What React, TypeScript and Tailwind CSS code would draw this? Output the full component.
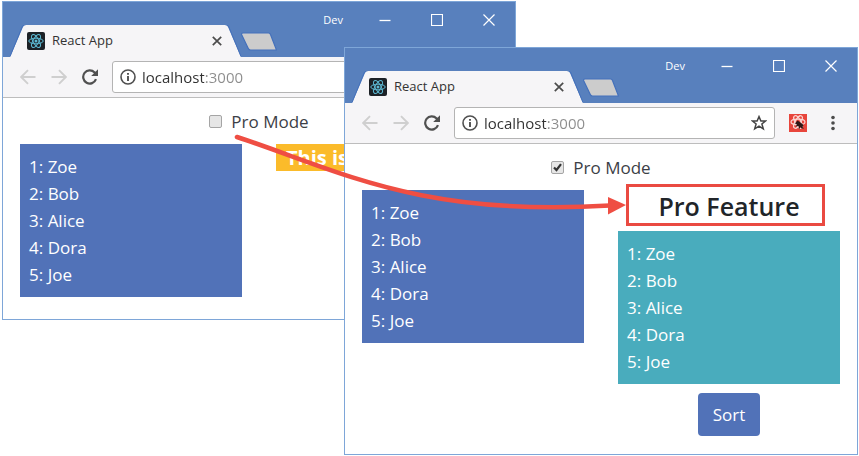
import { useId, type ReactNode } from "react";

const NAMES = ["Zoe", "Bob", "Alice", "Dora", "Joe"];

function ReactLogo() {
  return (
    <svg className="size-[18px] shrink-0" viewBox="0 0 18 18" aria-hidden="true">
      <rect width="18" height="18" rx="2" fill="#1c2126" />
      <g fill="none" stroke="#5db9d3" strokeWidth="1">
        <ellipse cx="9" cy="9" rx="7.2" ry="2.8" />
        <ellipse cx="9" cy="9" rx="7.2" ry="2.8" transform="rotate(60 9 9)" />
        <ellipse cx="9" cy="9" rx="7.2" ry="2.8" transform="rotate(120 9 9)" />
      </g>
      <circle cx="9" cy="9" r="1.5" fill="#5db9d3" />
    </svg>
  );
}

function TitleBar() {
  return (
    <div className="flex h-[55px] justify-between bg-[#5880bd]">
      <div className="flex items-end pl-[7px]">
        <div className="relative h-8 w-[231px]">
          <svg className="absolute inset-0 size-full" viewBox="0 0 231 32" aria-hidden="true">
            <path d="M0 32 L13 2 Q14 0 16 0 H215 Q217 0 218 2 L231 32Z" fill="#f6f5f7" />
            <path d="M0 31.5 L12.500 1 Q14 -0.500 16 -0.500 H215 Q217 -0.500 218.500 1 L231 31.5" fill="none" stroke="#4470bb" />
          </svg>
          <div className="relative flex h-full items-center pr-[19px] pl-[17px] text-[13px] text-[#333]">
            <ReactLogo />
            <span className="ml-[7px] flex-1">React App</span>
            <button type="button" aria-label="Close tab">
              <svg className="size-[10px]" viewBox="0 0 10 10" fill="none" stroke="#4c4c4c" strokeWidth="1.7">
                <path d="M0.800 0.800 9.200 9.200M9.200 0.800 0.800 9.200" />
              </svg>
            </button>
          </div>
        </div>
        <button type="button" aria-label="New tab" className="mb-[6px]">
          <svg className="block h-[19px] w-9" viewBox="0 0 36 19">
            <path d="M2 1 H27.500 Q29 1 29.500 2.500 L35.500 18 H9.500 Q8 18 7.300 16.500 L0.800 3 Q0 1 2 1Z" fill="#cccccc" stroke="#4470bb" strokeWidth="1.200" />
          </svg>
        </button>
      </div>
      <div className="flex h-9 items-center pr-5">
        <span className="mr-9 text-[11px] text-white">Dev</span>
        <div className="flex gap-10 text-white">
          <button type="button" aria-label="Minimize">
            <svg className="size-3" viewBox="0 0 12 12" fill="none" stroke="currentColor"><path d="M0.500 6.500H11.500" strokeWidth="1.300" /></svg>
          </button>
          <button type="button" aria-label="Maximize">
            <svg className="size-3" viewBox="0 0 12 12" fill="none" stroke="currentColor"><path d="M0.500 0.500H11.500V11.500H0.500Z" strokeWidth="1.200" /></svg>
          </button>
          <button type="button" aria-label="Close window">
            <svg className="size-3" viewBox="0 0 12 12" fill="none" stroke="currentColor"><path d="M0.500 0.500 11.500 11.500M11.500 0.500 0.500 11.500" strokeWidth="1.200" /></svg>
          </button>
        </div>
      </div>
    </div>
  );
}

function Toolbar() {
  return (
    <div className="flex h-[41px] items-center border-b border-[#bdbdbd] bg-[#f6f5f7] pr-[22px] pl-[17px]">
      <div className="flex gap-[15px]">
        <button type="button" aria-label="Back">
          <svg className="size-4" viewBox="0 0 16 16" fill="none" stroke="#cfcfcf" strokeWidth="1.900"><path d="M15.500 8H1.500M8 1.200 1.200 8 8 14.800" /></svg>
        </button>
        <button type="button" aria-label="Forward">
          <svg className="size-4" viewBox="0 0 16 16" fill="none" stroke="#cfcfcf" strokeWidth="1.900"><path d="M0.500 8H14.500M8 1.200 14.800 8 8 14.800" /></svg>
        </button>
        <button type="button" aria-label="Reload">
          <svg className="size-4" viewBox="0 0 16 16" fill="none"><path d="M14 10.200A6.600 6.600 0 1 1 12.600 3.400L14 4.800" stroke="#505050" strokeWidth="2.200" /><path d="M16 0.200V7H9.200Z" fill="#505050" /></svg>
        </button>
      </div>
      <div className="ml-[14px] flex h-8 min-w-0 flex-1 items-center rounded-[3px] border border-[#b4b4b4] bg-white px-[7px]">
        <svg className="size-4 shrink-0" viewBox="0 0 16 16" fill="none" stroke="#505050" aria-hidden="true">
          <circle cx="8" cy="8" r="7" strokeWidth="1.600" />
          <path d="M8 7V12M8 4V5.700" strokeWidth="1.900" />
        </svg>
        <input
          type="text"
          aria-label="Address"
          defaultValue="localhost:3000"
          className="ml-[6px] min-w-0 flex-1 bg-[linear-gradient(90deg,#303030_62px,#8c8c8c_62px)] bg-clip-text text-[15px] leading-6 text-transparent outline-none"
        />
        <button type="button" aria-label="Bookmark">
          <svg className="size-4" viewBox="0 0 16 16" fill="none" stroke="#444" strokeWidth="1.500">
            <path d="M8 1.600 9.900 6H14.600L10.900 9 12.300 13.900 8 11.100 3.700 13.900 5.100 9 1.400 6H6.100Z" />
          </svg>
        </button>
      </div>
      <button type="button" aria-label="React developer tools" className="ml-[14px]">
        <svg className="size-[18px]" viewBox="0 0 18 18">
          <rect width="18" height="18" fill="#e8453c" />
          <g fill="none" stroke="#fbd5d2" strokeWidth="1.200">
            <ellipse cx="9" cy="8" rx="7" ry="2.800" />
            <ellipse cx="9" cy="8" rx="7" ry="2.800" transform="rotate(60 9 8)" />
            <ellipse cx="9" cy="8" rx="7" ry="2.800" transform="rotate(120 9 8)" />
          </g>
          <path d="M6 9.500 8.500 6.500 11.500 8.500 14.500 11 13.500 13 15 14.500 12.500 14.500 11.500 13 10 15.500 9.500 12 6.500 12.500 8 10.500Z" fill="#301615" />
        </svg>
      </button>
      <button type="button" aria-label="Menu" className="ml-6">
        <svg className="h-4 w-1" viewBox="0 0 4 16" fill="#4c4c4c">
          <circle cx="2" cy="2.500" r="1.800" /><circle cx="2" cy="8" r="1.800" /><circle cx="2" cy="13.500" r="1.800" />
        </svg>
      </button>
    </div>
  );
}

function NameList({ className }: { className: string }) {
  return (
    <ul className={`${className} p-[9px] text-[17px] leading-[27px] text-white`}>
      {NAMES.map((name, i) => (
        <li key={name}>{i + 1}: {name}</li>
      ))}
    </ul>
  );
}

function BrowserWindow({ label, proMode, className, children }: { label: string; proMode: boolean; className: string; children: ReactNode }) {
  const id = useId();
  return (
    <section aria-label={label} className={`${className} absolute w-[514px] border border-[#7ea6d8] bg-white`}>
      <TitleBar />
      <Toolbar />
      <div className="px-[17px] pt-[10px]">
        <div className="mb-[9px] flex items-center justify-center gap-[9px]">
          <span className="relative size-[13px]">
            <input
              id={id}
              type="checkbox"
              defaultChecked={proMode}
              className="peer block size-full appearance-none rounded-[2px] border border-[#a5a5a5] bg-[#e6e6e6]"
            />
            <svg className="pointer-events-none absolute inset-0 hidden size-full peer-checked:block" viewBox="0 0 13 13" fill="none" stroke="#333" strokeWidth="2.200" aria-hidden="true">
              <path d="M3 6.500 5.500 9 10 3.200" />
            </svg>
          </span>
          <label htmlFor={id} className="text-[17px] leading-[27px] text-[#3c4046]">Pro Mode</label>
        </div>
        <div className="grid grid-cols-2 items-start gap-[34px]">
          <NameList className="bg-[#5172b8]" />
          {children}
        </div>
      </div>
    </section>
  );
}

export default function App() {
  return (
    <main className="relative min-h-screen overflow-hidden bg-white font-['Open_Sans','Noto_Sans',sans-serif]">
      <BrowserWindow label="Pro mode off" proMode={false} className="top-px left-[2px] pb-[22px]">
        <h4 className="bg-[#fbbb2a] px-[10px] text-[20px] leading-[27px] font-bold text-white">This is</h4>
      </BrowserWindow>
      <BrowserWindow label="Pro mode on" proMode className="top-[47px] left-[344px] pb-[18px]">
        <div className="flex flex-col">
          <h2 className="mb-2 text-center text-[25px] leading-[33px] font-semibold text-[#212529]">Pro Feature</h2>
          <NameList className="bg-[#49acbd]" />
          <button type="button" className="mt-[9px] self-center rounded-[4px] bg-[#5172b8] px-[15px] py-2 text-[17px] leading-[27px] text-white">Sort</button>
        </div>
      </BrowserWindow>
      <svg className="pointer-events-none absolute top-0 left-0 h-[456px] w-[859px]" viewBox="0 0 859 456" fill="none" aria-hidden="true">
        <rect x="627.500" y="185.500" width="196" height="39" stroke="#ea4a41" strokeWidth="3" />
        <path d="M237 137C340 171 420 217 610 205.500" stroke="#ef4e43" strokeWidth="4.600" strokeLinecap="round" />
        <path d="M608 197 626 205 608 214.500Z" fill="#ef4e43" />
      </svg>
    </main>
  );
}
